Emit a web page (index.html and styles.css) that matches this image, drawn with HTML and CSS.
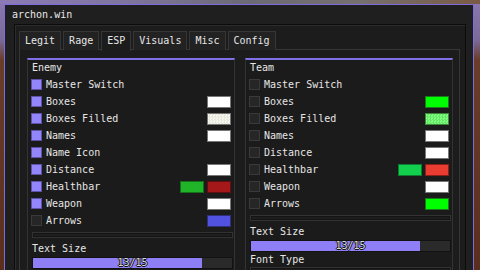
FILE: index.html
```html
<!DOCTYPE html>
<html>
<head>
<meta charset="utf-8">
<link rel="stylesheet" href="styles.css">
</head>
<body>
<div class="window">
  <div class="title">archon.win</div>
  <div class="frame">
    <div class="tabs">
      <div class="tab">Legit</div>
      <div class="tab">Rage</div>
      <div class="tab active">ESP</div>
      <div class="tab">Visuals</div>
      <div class="tab">Misc</div>
      <div class="tab">Config</div>
    </div>
    <div class="tabbody">
      <div class="group">
        <div class="ghead">Enemy</div>
        <div class="row"><span class="cb on"></span><span class="lbl">Master Switch</span></div>
        <div class="row"><span class="cb on"></span><span class="lbl">Boxes</span><span class="sw white"></span></div>
        <div class="row"><span class="cb on"></span><span class="lbl">Boxes Filled</span><span class="sw checker-w"></span></div>
        <div class="row"><span class="cb on"></span><span class="lbl">Names</span><span class="sw white"></span></div>
        <div class="row"><span class="cb on"></span><span class="lbl">Name Icon</span></div>
        <div class="row"><span class="cb on"></span><span class="lbl">Distance</span><span class="sw white"></span></div>
        <div class="row"><span class="cb on"></span><span class="lbl">Healthbar</span><span class="sw green2"></span><span class="sw red2"></span></div>
        <div class="row"><span class="cb on"></span><span class="lbl">Weapon</span><span class="sw white"></span></div>
        <div class="row"><span class="cb"></span><span class="lbl">Arrows</span><span class="sw blue"></span></div>
        <div class="sep"></div>
        <div class="slabel">Text Size</div>
        <div class="slider"><div class="fill" style="width:85%"></div><span class="sval">13/15</span></div>
      </div>
      <div class="group">
        <div class="ghead">Team</div>
        <div class="row"><span class="cb"></span><span class="lbl">Master Switch</span></div>
        <div class="row"><span class="cb"></span><span class="lbl">Boxes</span><span class="sw lime"></span></div>
        <div class="row"><span class="cb"></span><span class="lbl">Boxes Filled</span><span class="sw checker-g"></span></div>
        <div class="row"><span class="cb"></span><span class="lbl">Names</span><span class="sw white"></span></div>
        <div class="row"><span class="cb"></span><span class="lbl">Distance</span><span class="sw white"></span></div>
        <div class="row"><span class="cb"></span><span class="lbl">Healthbar</span><span class="sw green"></span><span class="sw red"></span></div>
        <div class="row"><span class="cb"></span><span class="lbl">Weapon</span><span class="sw white"></span></div>
        <div class="row"><span class="cb"></span><span class="lbl">Arrows</span><span class="sw lime"></span></div>
        <div class="sep"></div>
        <div class="slabel">Text Size</div>
        <div class="slider"><div class="fill" style="width:85%"></div><span class="sval">13/15</span></div>
        <div class="slabel short">Font Type</div>
        <div class="sep tall"></div>
      </div>
    </div>
  </div>
</div>
</body>
</html>
```
FILE: styles.css
```css
* { box-sizing: border-box; }
html, body { margin: 0; padding: 0; }
body {
  width: 480px;
  height: 270px;
  overflow: hidden;
  font-family: "DejaVu Sans Mono", "Liberation Mono", monospace;
  font-size: 10px;
  color: #e6e6e6;
  background:
    linear-gradient(90deg, #8c7ab6 0, #7f76a0 120px, #6c6a74 250px, #767070 360px, #7a5a44 480px) top left / 100% 4px no-repeat,
    linear-gradient(180deg, #8a78b0 0, #7a6a9a 40px, #6a3c2a 60px, #5a2e1e 270px);
  padding: 4px 0 0 4px;
}
.window {
  width: 470px;
  height: 280px;
  border: 1px solid #7c6cdc;
  background: #1f1f1f;
  overflow: hidden;
}
.title {
  height: 19px;
  line-height: 19px;
  padding-left: 7px;
  color: #e8e8e8;
}
.frame {
  height: 260px;
  margin: 0 7px 0 9px;
  border: 1px solid #0c0c0c;
  background: #1c1c1c;
  padding: 6px 5px 0 4px;
  box-shadow: inset 1px 1px 0 #2c2c2c;
}
.tabs {
  display: flex;
  gap: 2px;
  height: 19px;
  position: relative;
  z-index: 1;
}
.tab {
  height: 19px;
  line-height: 18px;
  padding: 0 5px;
  border: 1px solid #363636;
  border-bottom: none;
  background: #222222;
  color: #e6e6e6;
}
.tab.active {
  background: #1c1c1c;
  height: 20px;
}
.tabbody {
  margin-top: -1px;
  height: 230px;
  border: 1px solid #363636;
  background: #1c1c1c;
  padding: 8px 6px 0 7px;
  display: flex;
  gap: 10px;
  align-items: flex-start;
}
.group {
  width: 208px;
  height: 230px;
  border: 1px solid #333333;
  border-top: 2px solid #8070e8;
  background: #1b1b1b;
  padding: 0 3px 0 3px;
}
.ghead {
  height: 16px;
  line-height: 16px;
  padding-left: 1px;
}
.row {
  display: flex;
  align-items: center;
  height: 17px;
  gap: 3px;
}
.row:first-of-type { margin-top: 0; }
.cb {
  width: 11px;
  height: 11px;
  border: 1px solid #3a3a3a;
  background: #262626;
  flex: none;
  margin-right: 1px;
}
.cb.on {
  background: #9385fc;
  border-color: #5c52a8;
}
.lbl {
  flex: 1;
  white-space: pre;
}
.sw {
  width: 24px;
  height: 12px;
  border: 1px solid #6a6a6a;
  flex: none;
}
.white { background: #ffffff; border-color: #777; }
.checker-w {
  background-color: #f4f4ec;
  background-image: repeating-conic-gradient(#e8e8dc 0 25%, #f8f8f2 0 50%);
  background-size: 3px 3px;
  border-color: #777;
}
.checker-g {
  background-color: #70f070;
  background-image: repeating-conic-gradient(#66e866 0 25%, #80ff80 0 50%);
  background-size: 3px 3px;
  border-color: #3a8a3a;
}
.lime { background: #00ff00; border-color: #1a7a1a; }
.green { background: #12d04e; border-color: #0c7a30; }
.red { background: #ea3c30; border-color: #8a2018; }
.green2 { background: #20b428; border-color: #14701a; }
.red2 { background: #a4181a; border-color: #600e10; }
.blue { background: #5252e0; border-color: #30307a; }
.sep {
  height: 6px;
  margin: 3px 0 0 1px;
  width: 201px;
  border: 1px solid #323232;
  background: #1e1e1e;
  box-shadow: inset 0 0 0 1px #141414;
}
.sep.tall { height: 14px; margin-top: 0; }
.slabel {
  height: 19px;
  line-height: 22px;
  padding-left: 1px;
}
.slabel.short {
  height: 15px;
  line-height: 16px;
}
.slider {
  position: relative;
  height: 12px;
  width: 201px;
  margin-left: 1px;
  border: 1px solid #121212;
  background: #2a2a2a;
}
.fill {
  height: 100%;
  background: #8f7ff6;
}
.sval {
  position: absolute;
  left: 0;
  right: 0;
  top: 0;
  line-height: 10px;
  text-align: center;
  color: #d8d8d8;
  text-shadow: 1px 0 0 #111, -1px 0 0 #111, 0 1px 0 #111, 0 -1px 0 #111;
}
```
